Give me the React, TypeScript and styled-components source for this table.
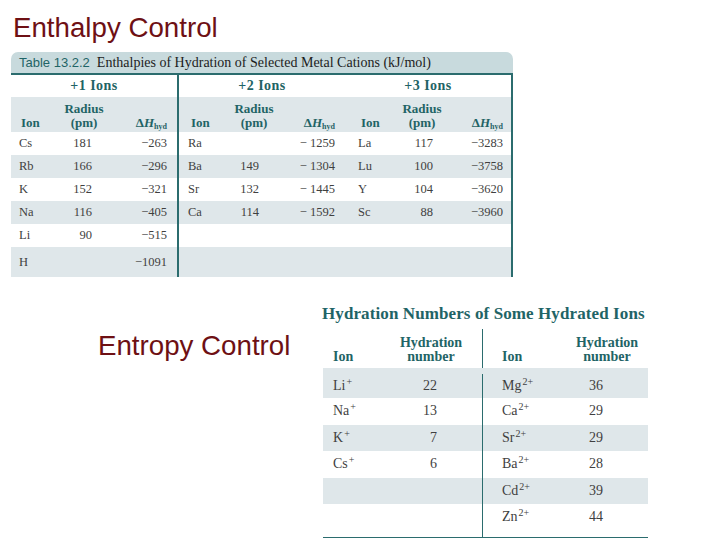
import React from "react";
import styled, { createGlobalStyle } from "styled-components";

const TEAL = "#2b6c6e";
const TEAL_TEXT = "#1f6466";
const ROW_GRAY = "#dfe7ea";
const CAP_BG = "#c8dadd";
const MAROON = "#6e1014";
const DATA = "#3f3f3f";

const Global = createGlobalStyle`
  html, body { margin: 0; padding: 0; background: #ffffff; }
  body { width: 720px; height: 540px; overflow: hidden; font-family: "Liberation Serif", serif; }
`;

const Page = styled.div`
  width: 720px;
  height: 540px;
  padding-top: 14px;
  box-sizing: border-box;
  display: flex;
  flex-direction: column;
`;

const SlideTitle = styled.h1<{ $indent: number }>`
  margin: 0;
  padding-left: ${(p) => p.$indent}px;
  font-family: "Liberation Sans", Arial, sans-serif;
  font-weight: 400;
  font-size: 27.7px;
  line-height: 28px;
  color: ${MAROON};
  white-space: nowrap;
`;

/* ---------- Table 1 ---------- */

const Table1 = styled.div`
  margin: 10px 0 0 11px;
  width: 502px;
  display: flex;
  flex-direction: column;
`;

const Caption = styled.div`
  height: 21px;
  background: ${CAP_BG};
  border-radius: 7px 7px 0 0;
  border-bottom: 2px solid ${TEAL};
  display: flex;
  align-items: center;
  padding-left: 8px;
  white-space: nowrap;
`;

const CapLabel = styled.span`
  font-family: "Liberation Sans", Arial, sans-serif;
  font-size: 13px;
  color: ${TEAL_TEXT};
`;

const CapText = styled.span`
  font-family: "Liberation Serif", serif;
  font-size: 14px;
  color: #1c1c1c;
  margin-left: 7px;
`;

const Row1 = styled.div<{ $h: number; $gray?: boolean }>`
  display: grid;
  grid-template-columns: 34px 78px 54px 43px 68px 57px 45px 64px 57px;
  height: ${(p) => p.$h}px;
  background: ${(p) => (p.$gray ? ROW_GRAY : "#ffffff")};
  border-right: 2px solid ${TEAL};
  align-items: stretch;
`;

type Align = "left" | "right" | "center";

const Cell = styled.div<{
  $align: Align;
  $pl?: number;
  $pr?: number;
  $divider?: boolean;
  $valign?: "center" | "end";
  $span?: number;
}>`
  display: flex;
  flex-direction: column;
  justify-content: ${(p) => (p.$valign === "end" ? "flex-end" : "center")};
  align-items: ${(p) =>
    p.$align === "left" ? "flex-start" : p.$align === "right" ? "flex-end" : "center"};
  text-align: ${(p) => p.$align};
  padding-left: ${(p) => p.$pl ?? 0}px;
  padding-right: ${(p) => p.$pr ?? 0}px;
  border-left: ${(p) => (p.$divider ? `2px solid ${TEAL}` : "none")};
  grid-column: ${(p) => (p.$span ? `span ${p.$span}` : "auto")};
  white-space: nowrap;
  min-width: 0;
`;

const GroupText = styled.span`
  font-weight: 700;
  font-size: 14px;
  letter-spacing: 0.5px;
  color: ${TEAL_TEXT};
`;

const HeadText = styled.span`
  font-weight: 700;
  font-size: 13px;
  line-height: 14px;
  color: ${TEAL_TEXT};
  padding-bottom: 2px;
`;

const DeltaH = styled.span`
  font-weight: 700;
  font-size: 13px;
  line-height: 14px;
  color: ${TEAL_TEXT};
  padding-bottom: 2px;
  i { font-style: italic; }
`;

const Sub = styled.sub`
  font-size: 8px;
  vertical-align: -2px;
  line-height: 0;
`;

const DataText = styled.span<{ $size: number }>`
  font-size: ${(p) => p.$size}px;
  color: ${DATA};
`;

const Sup = styled.sup`
  font-size: 10px;
  vertical-align: 5px;
  line-height: 0;
  margin-left: 1px;
`;

const dataCols1 = [
  { align: "left" as Align, pl: 8 },
  { align: "right" as Align, pr: 31 },
  { align: "right" as Align, pr: 10 },
  { align: "left" as Align, pl: 9, divider: true },
  { align: "right" as Align, pr: 29 },
  { align: "right" as Align, pr: 10 },
  { align: "left" as Align, pl: 13 },
  { align: "right" as Align, pr: 21 },
  { align: "right" as Align, pr: 8 },
];

const plus1 = [
  ["Cs", "181", "−263"],
  ["Rb", "166", "−296"],
  ["K", "152", "−321"],
  ["Na", "116", "−405"],
  ["Li", "90", "−515"],
  ["H", "", "−1091"],
];
const plus2 = [
  ["Ra", "", "− 1259"],
  ["Ba", "149", "− 1304"],
  ["Sr", "132", "− 1445"],
  ["Ca", "114", "− 1592"],
];
const plus3 = [
  ["La", "117", "−3283"],
  ["Lu", "100", "−3758"],
  ["Y", "104", "−3620"],
  ["Sc", "88", "−3960"],
];

const DH = () => (
  <DeltaH>
    Δ<i>H</i>
    <Sub>hyd</Sub>
  </DeltaH>
);

const Radius = () => (
  <HeadText>
    Radius
    <br />
    (pm)
  </HeadText>
);

const EnthalpyTable = () => (
  <Table1>
    <Caption>
      <CapLabel>Table 13.2.2</CapLabel>
      <CapText>Enthalpies of Hydration of Selected Metal Cations (kJ/mol)</CapText>
    </Caption>
    <Row1 $h={22}>
      <Cell $align="center" $span={3}>
        <GroupText>+1 Ions</GroupText>
      </Cell>
      <Cell $align="center" $span={3} $divider>
        <GroupText>+2 Ions</GroupText>
      </Cell>
      <Cell $align="center" $span={3}>
        <GroupText>+3 Ions</GroupText>
      </Cell>
    </Row1>
    <Row1 $h={35} $gray>
      <Cell $align="left" $pl={10} $valign="end"><HeadText>Ion</HeadText></Cell>
      <Cell $align="center" $valign="end"><Radius /></Cell>
      <Cell $align="right" $pr={10} $valign="end"><DH /></Cell>
      <Cell $align="left" $pl={12} $valign="end" $divider><HeadText>Ion</HeadText></Cell>
      <Cell $align="center" $valign="end"><Radius /></Cell>
      <Cell $align="right" $pr={10} $valign="end"><DH /></Cell>
      <Cell $align="left" $pl={16} $valign="end"><HeadText>Ion</HeadText></Cell>
      <Cell $align="center" $valign="end"><Radius /></Cell>
      <Cell $align="right" $pr={8} $valign="end"><DH /></Cell>
    </Row1>
    {plus1.map((r, i) => {
      const values = [...r, ...(plus2[i] ?? ["", "", ""]), ...(plus3[i] ?? ["", "", ""])];
      return (
        <Row1 key={i} $h={i === plus1.length - 1 ? 30 : 23} $gray={i % 2 === 1}>
          {values.map((v, j) => (
            <Cell
              key={j}
              $align={dataCols1[j].align}
              $pl={dataCols1[j].pl}
              $pr={dataCols1[j].pr}
              $divider={dataCols1[j].divider}
            >
              <DataText $size={12.5}>{v}</DataText>
            </Cell>
          ))}
        </Row1>
      );
    })}
  </Table1>
);

/* ---------- Bottom section ---------- */

const Bottom = styled.div`
  margin-top: 27px;
  display: flex;
  align-items: flex-start;
`;

const LeftCol = styled.div`
  width: 323px;
  padding-top: 28px;
  box-sizing: border-box;
`;

const Table2 = styled.div`
  width: 325px;
  display: flex;
  flex-direction: column;
`;

const Title2 = styled.div`
  font-weight: 700;
  font-size: 17px;
  line-height: 20px;
  letter-spacing: 0.1px;
  color: ${TEAL_TEXT};
  white-space: nowrap;
  margin-left: -1px;
`;

const Grid2 = styled.div`
  margin-top: 5px;
  border-bottom: 1.5px solid ${TEAL};
  display: flex;
  flex-direction: column;
`;

const Row2 = styled.div<{ $h: number; $gray?: boolean; $pt?: number }>`
  display: grid;
  grid-template-columns: 57px 102px 58px 108px;
  height: ${(p) => p.$h}px;
  box-sizing: border-box;
  padding-top: ${(p) => p.$pt ?? 0}px;
  background: ${(p) => (p.$gray ? ROW_GRAY : "#ffffff")};
`;

const Cell2 = styled.div<{ $align: Align; $pl?: number; $pr?: number; $divider?: boolean; $valign?: "center" | "end" }>`
  display: flex;
  flex-direction: column;
  justify-content: ${(p) => (p.$valign === "end" ? "flex-end" : "center")};
  align-items: ${(p) =>
    p.$align === "left" ? "flex-start" : p.$align === "right" ? "flex-end" : "center"};
  text-align: ${(p) => p.$align};
  padding-left: ${(p) => p.$pl ?? 0}px;
  padding-right: ${(p) => p.$pr ?? 0}px;
  border-left: ${(p) => (p.$divider ? `1.5px solid ${TEAL}` : "none")};
  white-space: nowrap;
`;

const Head2 = styled.span`
  font-weight: 700;
  font-size: 14px;
  line-height: 14px;
  color: ${TEAL_TEXT};
  padding-bottom: 4px;
`;

const left2: [string, string, string][] = [
  ["Li", "+", "22"],
  ["Na", "+", "13"],
  ["K", "+", "7"],
  ["Cs", "+", "6"],
];
const right2: [string, string, string][] = [
  ["Mg", "2+", "36"],
  ["Ca", "2+", "29"],
  ["Sr", "2+", "29"],
  ["Ba", "2+", "28"],
  ["Cd", "2+", "39"],
  ["Zn", "2+", "44"],
];

const Ion = ({ sym, charge }: { sym: string; charge: string }) =>
  sym ? (
    <DataText $size={14}>
      {sym}
      <Sup>{charge}</Sup>
    </DataText>
  ) : null;

const HydrationTable = () => (
  <Table2>
    <Title2>Hydration Numbers of Some Hydrated Ions</Title2>
    <Grid2>
      <Row2 $h={39}>
        <Cell2 $align="left" $pl={10} $valign="end"><Head2>Ion</Head2></Cell2>
        <Cell2 $align="center" $valign="end">
          <Head2>Hydration<br />number</Head2>
        </Cell2>
        <Cell2 $align="left" $pl={19} $valign="end" $divider><Head2>Ion</Head2></Cell2>
        <Cell2 $align="center" $pl={26} $valign="end">
          <Head2>Hydration<br />number</Head2>
        </Cell2>
      </Row2>
      {right2.map((r, i) => {
        const l = left2[i] ?? ["", "", ""];
        return (
          <Row2 key={i} $h={i === 0 ? 30 : 26.5} $pt={i === 0 ? 6 : 0} $gray={i % 2 === 0}>
            <Cell2 $align="left" $pl={10}>
              <Ion sym={l[0]} charge={l[1]} />
            </Cell2>
            <Cell2 $align="right" $pr={45}>
              <DataText $size={14}>{l[2]}</DataText>
            </Cell2>
            <Cell2 $align="left" $pl={19} $divider>
              <Ion sym={r[0]} charge={r[1]} />
            </Cell2>
            <Cell2 $align="right" $pr={45}>
              <DataText $size={14}>{r[2]}</DataText>
            </Cell2>
          </Row2>
        );
      })}
      <Row2 $h={6}>
        <Cell2 $align="left" />
        <Cell2 $align="left" />
        <Cell2 $align="left" $divider />
        <Cell2 $align="left" />
      </Row2>
    </Grid2>
  </Table2>
);

export default function App() {
  return (
    <>
      <Global />
      <Page>
        <SlideTitle $indent={13}>Enthalpy Control</SlideTitle>
        <EnthalpyTable />
        <Bottom>
          <LeftCol>
            <SlideTitle $indent={98}>Entropy Control</SlideTitle>
          </LeftCol>
          <HydrationTable />
        </Bottom>
      </Page>
    </>
  );
}
